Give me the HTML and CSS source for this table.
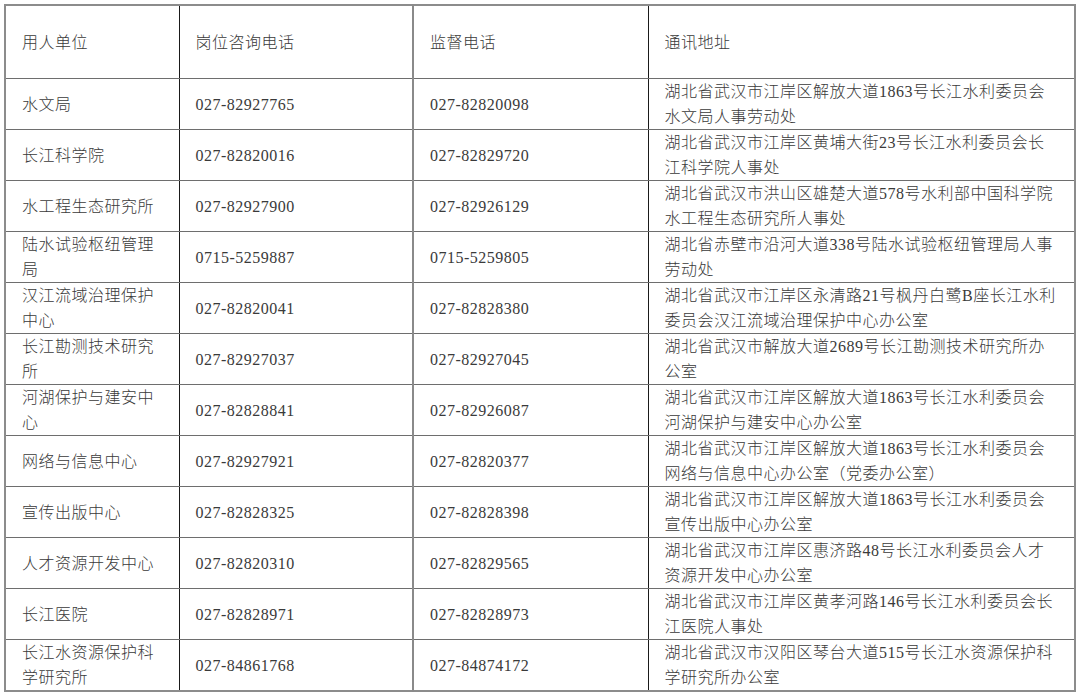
FILE: index.html
```html
<!DOCTYPE html>
<html lang="zh-CN">
<head>
<meta charset="utf-8">
<title>联系方式</title>
<link rel="stylesheet" href="styles.css">
</head>
<body>
<table class="contacts">
  <colgroup>
    <col class="c-unit">
    <col class="c-phone">
    <col class="c-super">
    <col class="c-addr">
  </colgroup>
  <thead>
    <tr class="head-row">
      <th class="col-unit">用人单位</th>
      <th class="col-phone">岗位咨询电话</th>
      <th class="col-super">监督电话</th>
      <th class="col-addr">通讯地址</th>
    </tr>
  </thead>
  <tbody>
    <tr><td class="col-unit">水文局</td><td class="col-phone">027-82927765</td><td class="col-super">027-82820098</td><td class="col-addr">湖北省武汉市江岸区解放大道1863号长江水利委员会<br>水文局人事劳动处</td></tr>
    <tr><td class="col-unit">长江科学院</td><td class="col-phone">027-82820016</td><td class="col-super">027-82829720</td><td class="col-addr">湖北省武汉市江岸区黄埔大街23号长江水利委员会长<br>江科学院人事处</td></tr>
    <tr><td class="col-unit">水工程生态研究所</td><td class="col-phone">027-82927900</td><td class="col-super">027-82926129</td><td class="col-addr">湖北省武汉市洪山区雄楚大道578号水利部中国科学院<br>水工程生态研究所人事处</td></tr>
    <tr><td class="col-unit">陆水试验枢纽管理<br>局</td><td class="col-phone">0715-5259887</td><td class="col-super">0715-5259805</td><td class="col-addr">湖北省赤壁市沿河大道338号陆水试验枢纽管理局人事<br>劳动处</td></tr>
    <tr><td class="col-unit">汉江流域治理保护<br>中心</td><td class="col-phone">027-82820041</td><td class="col-super">027-82828380</td><td class="col-addr">湖北省武汉市江岸区永清路21号枫丹白鹭B座长江水利<br>委员会汉江流域治理保护中心办公室</td></tr>
    <tr><td class="col-unit">长江勘测技术研究<br>所</td><td class="col-phone">027-82927037</td><td class="col-super">027-82927045</td><td class="col-addr">湖北省武汉市解放大道2689号长江勘测技术研究所办<br>公室</td></tr>
    <tr><td class="col-unit">河湖保护与建安中<br>心</td><td class="col-phone">027-82828841</td><td class="col-super">027-82926087</td><td class="col-addr">湖北省武汉市江岸区解放大道1863号长江水利委员会<br>河湖保护与建安中心办公室</td></tr>
    <tr><td class="col-unit">网络与信息中心</td><td class="col-phone">027-82927921</td><td class="col-super">027-82820377</td><td class="col-addr">湖北省武汉市江岸区解放大道1863号长江水利委员会<br>网络与信息中心办公室（党委办公室）</td></tr>
    <tr><td class="col-unit">宣传出版中心</td><td class="col-phone">027-82828325</td><td class="col-super">027-82828398</td><td class="col-addr">湖北省武汉市江岸区解放大道1863号长江水利委员会<br>宣传出版中心办公室</td></tr>
    <tr><td class="col-unit">人才资源开发中心</td><td class="col-phone">027-82820310</td><td class="col-super">027-82829565</td><td class="col-addr">湖北省武汉市江岸区惠济路48号长江水利委员会人才<br>资源开发中心办公室</td></tr>
    <tr><td class="col-unit">长江医院</td><td class="col-phone">027-82828971</td><td class="col-super">027-82828973</td><td class="col-addr">湖北省武汉市江岸区黄孝河路146号长江水利委员会长<br>江医院人事处</td></tr>
    <tr><td class="col-unit">长江水资源保护科<br>学研究所</td><td class="col-phone">027-84861768</td><td class="col-super">027-84874172</td><td class="col-addr">湖北省武汉市汉阳区琴台大道515号长江水资源保护科<br>学研究所办公室</td></tr>
  </tbody>
</table>
</body>
</html>
```
FILE: styles.css
```css
html, body {
  margin: 0;
  padding: 0;
  background: #ffffff;
}

body {
  padding: 4px 0 0 4px;
}

.contacts {
  border-collapse: collapse;
  table-layout: fixed;
  width: 1070px;
  border: 2px solid #8c8c8c;
  font-family: "Liberation Serif", "Noto Sans CJK SC", serif;
  font-size: 16px;
  font-weight: 300;
  letter-spacing: 0.5px;
  color: #3a3a3a;
}

.c-unit { width: 174px; }
.c-phone { width: 234px; }
.c-super { width: 235px; }
.c-addr { width: 427px; }

.contacts th,
.contacts td {
  text-align: left;
  font-weight: 300;
  vertical-align: middle;
  padding: 0 8px 0 16px;
  line-height: 25px;
  height: 50px;
  white-space: nowrap;
  border-top: 1px solid #6e6e6e;
  border-bottom: 1px solid #6e6e6e;
}

.contacts .head-row th {
  height: 72px;
}

.col-unit { border-right: 1px solid #1a1a1a; }
.col-phone { border-right: 2px solid #8a8a8a; }
.col-super { border-right: 1px solid #1a1a1a; }
.col-addr { padding-left: 16px; }
```
